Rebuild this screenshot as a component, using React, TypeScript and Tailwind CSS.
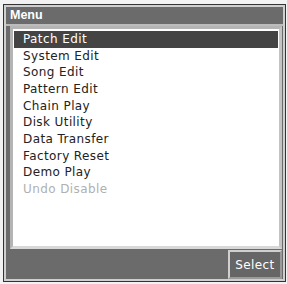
import React from 'react';

const items = [
  'Patch Edit',
  'System Edit',
  'Song Edit',
  'Pattern Edit',
  'Chain Play',
  'Disk Utility',
  'Data Transfer',
  'Factory Reset',
  'Demo Play',
  'Undo Disable',
];

export default function App() {
  return (
    <div className="w-[287px] h-[284px] bg-[#f2f2f2] pt-[4px] pl-[3px] pr-[1px] pb-[2px] font-['DejaVu_Sans',sans-serif]">
      <div className="flex h-full flex-col border border-[#333] bg-[#cfcfcf] p-[2px]">
        {/* Title */}
        <div className="flex h-[17px] shrink-0 items-center bg-[#6b6b6b] pl-[4px] font-['Liberation_Sans',sans-serif] text-[12.5px] font-bold leading-none text-white">
          Menu
        </div>
        <div className="h-[2px] shrink-0 bg-[#bcbcbc]" />

        {/* Body */}
        <div className="flex flex-1 flex-col bg-[#6b6b6b] pl-[4px] pr-[1px]">
          <div className="flex flex-1 flex-col border-[3px] border-[#b4b4b4] border-b-[#d8d8d8] border-r-[#c4c4c4] bg-white px-px pt-[2px]">
            <div className="flex flex-col">
              {items.map((item, i) => (
                <div
                  key={item}
                  className={`h-[16.67px] pl-[9px] text-[12px] leading-[16.67px] tracking-[0.4px] ${
                    i === 0
                      ? 'bg-[#444] text-white'
                      : i === items.length - 1
                        ? 'text-[#b0b0b0]'
                        : 'text-[#222]'
                  }`}
                >
                  {item}
                </div>
              ))}
            </div>
          </div>

          {/* Bottom bar */}
          <div className="flex h-[30px] shrink-0 items-end justify-end">
            <div className="flex h-[29px] w-[54px] items-center justify-center border-2 border-[#d0d0d0] border-r-[#9a9a9a] border-b-[#9a9a9a] bg-[#666] text-[12px] tracking-[0.4px] text-white">
              Select
            </div>
          </div>
        </div>
      </div>
    </div>
  );
}
